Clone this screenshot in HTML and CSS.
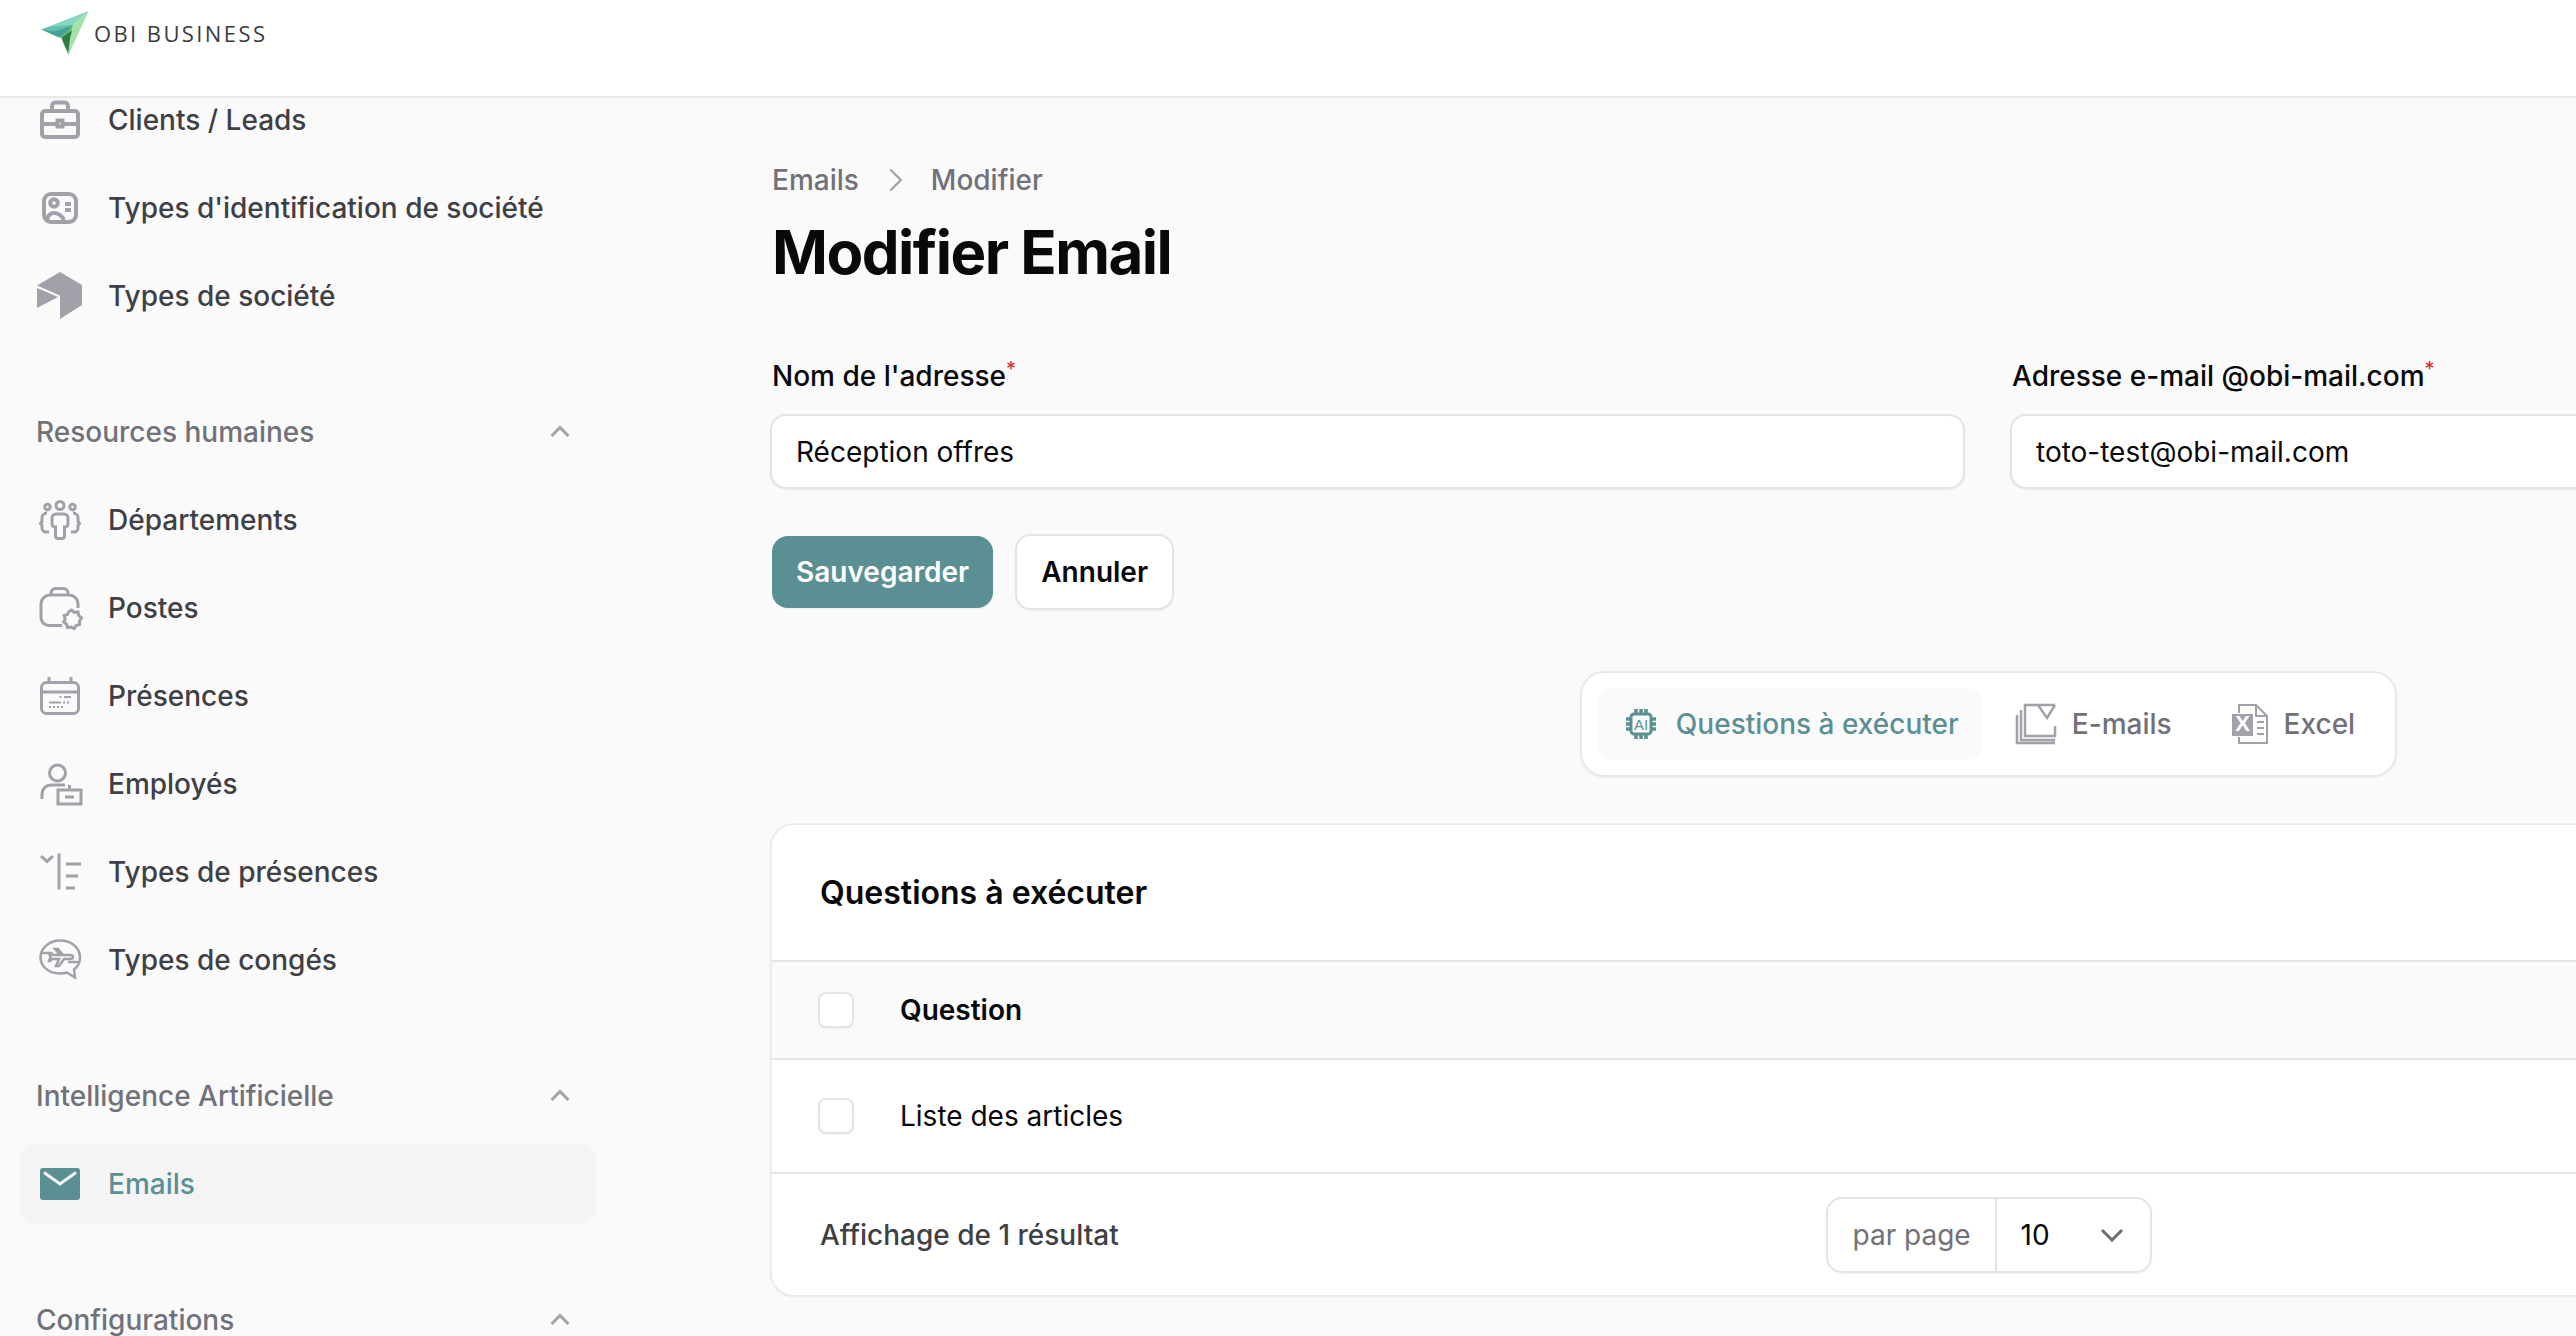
FILE: index.html
```html
<!DOCTYPE html>
<html lang="fr">
<head>
<meta charset="utf-8">
<title>Modifier Email</title>
<link rel="stylesheet" href="styles.css">
</head>
<body>
<header class="topbar">
  <a class="brand">
    <svg class="brand-logo" viewBox="10 6 48 45" aria-hidden="true">
      <polygon points="10.7,25 57.3,6.7 42,21 24,28" fill="#8ad6c5"/>
      <polygon points="10.7,25 42,21 30,33 28,33" fill="#44a394"/>
      <polygon points="10.7,25 24,27 42,21 20,22" fill="#63bfae"/>
      <polygon points="57.3,6.7 42,21 38,32 37.3,50" fill="#a2e2a6"/>
      <polygon points="42,21 30,33 33,40 37.3,50 38,32" fill="#5ab368"/>
      <polygon points="41,26 31,33 34,41 37.3,47 39,33" fill="#2f7a45"/>
    </svg>
    <span class="brand-name">OBI BUSINESS</span>
  </a>
</header>
<div class="layout">
  <aside class="sidebar">
    <nav class="nav">
      <ul class="nav-list">
        <li class="nav-item">
          <svg class="nav-icon is-bold" viewBox="0 0 40 40"><rect x="2" y="11" width="36" height="26" rx="3"/><path d="M12 11V6a3.500 3.500 0 0 1 3.500-3.500h9A3.500 3.500 0 0 1 28 6v5M2 24h15M23 24h15"/><rect x="17.500" y="20.500" width="5" height="6"/></svg>
          <span>Clients / Leads</span>
        </li>
        <li class="nav-item">
          <svg class="nav-icon is-bold" viewBox="0 0 40 40"><rect x="4" y="6" width="32" height="28" rx="7"/><circle cx="14" cy="15" r="3.800"/><path d="M25 16h6M25 22h6M7 32c1-5 4-7 7-7s8 2 10 7"/></svg>
          <span>Types d'identification de société</span>
        </li>
        <li class="nav-item">
          <svg class="nav-icon is-solid" viewBox="0 0 40 40"><path d="M20-4 42 9v20L20 43V19.500L-3 9.500Z"/><path d="M-3 12 18 21-3 32Z"/></svg>
          <span>Types de société</span>
        </li>
      </ul>
      <div class="nav-group">
        <div class="group-head"><span>Resources humaines</span><svg class="group-chevron" viewBox="0 0 40 40"><path d="M11.500 24 20 15.500 28.500 24"/></svg></div>
        <ul class="nav-list">
          <li class="nav-item">
            <svg class="nav-icon" viewBox="0 0 40 40"><circle cx="20" cy="5.500" r="4"/><circle cx="7.500" cy="7" r="2.800"/><circle cx="32.500" cy="7" r="2.800"/><path d="M16 14h8a4 4 0 0 1 4 4v6a3 3 0 0 1-3.500 3v9a2.500 2.500 0 0 1-2.500 2.500h-4A2.500 2.500 0 0 1 15.500 36v-9A3 3 0 0 1 12 24v-6a4 4 0 0 1 4-4Z"/><path d="M7 13a5 5 0 0 0-5 5v3.500l-1.500 2 1.500 2V28a4 4 0 0 0 4 4h3M33 13a5 5 0 0 1 5 5v3.500l1.500 2-1.500 2V28a4 4 0 0 1-4 4h-3"/></svg>
            <span>Départements</span>
          </li>
          <li class="nav-item">
            <svg class="nav-icon" viewBox="0 0 40 40"><path d="M22 37.500H9a8 8 0 0 1-8-8V16a9 9 0 0 1 9-9h19a9 9 0 0 1 9 9v4"/><path d="M11 7V5a4.500 4.500 0 0 1 4.500-4.500h8A4.500 4.500 0 0 1 28 5v2"/><path d="m31.500 22 3 2.500 3.500-.5.800 3.500 2.700 2.500-2 3 .2 3.500-3.500 1-2 3-3.200-1.500-3.500.500-1-3.500-2.800-2 1.500-3.200-1-3.300 3.300-1.200 1.800-3Z"/></svg>
            <span>Postes</span>
          </li>
          <li class="nav-item">
            <svg class="nav-icon" viewBox="0 0 40 40"><rect x="1.500" y="6.500" width="37" height="31" rx="5"/><path d="M1.500 16h37M9 1v5.500M31 1v5.500"/><path class="fine" d="M19.500 21h2M24 21h7M9 26.500h12M23 26.500h2M27 26.500h2M9 31h2M13 31h2M17 31h2M21 31h2"/></svg>
            <span>Présences</span>
          </li>
          <li class="nav-item">
            <svg class="nav-icon" viewBox="0 0 40 40"><circle cx="17.500" cy="9" r="8"/><path d="M2 35v-5a9 9 0 0 1 9-9h14"/><rect x="18" y="26" width="23" height="14"/><path d="M29.500 26v-5M25 33h9"/></svg>
            <span>Employés</span>
          </li>
          <li class="nav-item">
            <svg class="nav-icon" viewBox="0 0 40 40"><path d="m1 4 6 5.500L13 4M19 1.500v36M26 12h15M26 24h12M26 36h9"/></svg>
            <span>Types de présences</span>
          </li>
          <li class="nav-item">
            <svg class="nav-icon is-thin" viewBox="0 0 40 40"><path d="M20 .500c11 0 20 7 20 17 0 5-2 9-6 12l1 8-8-5c-2 .600-4.500 1-7 1-11 0-19.500-7-19.500-16S9 .500 20 .500Z"/><path d="M2 13h10M28 22h10M15 9h3l5 6h7c2 0 3 .800 3 2s-1 2-3 2h-6l-5 7h-3l3-7h-7l-2 2H9l1.500-4L9 13h2l2 2h7l-5-6Z"/></svg>
            <span>Types de congés</span>
          </li>
        </ul>
      </div>
      <div class="nav-group">
        <div class="group-head"><span>Intelligence Artificielle</span><svg class="group-chevron" viewBox="0 0 40 40"><path d="M11.500 24 20 15.500 28.500 24"/></svg></div>
        <ul class="nav-list">
          <li class="nav-item is-active">
            <svg class="nav-icon mail-icon" viewBox="0 0 40 40"><rect y="4" width="40" height="32" rx="3"/><path d="M4 8.500 20 20 36 8.500"/></svg>
            <span>Emails</span>
          </li>
        </ul>
      </div>
      <div class="nav-group">
        <div class="group-head"><span>Configurations</span><svg class="group-chevron" viewBox="0 0 40 40"><path d="M11.500 24 20 15.500 28.500 24"/></svg></div>
      </div>
    </nav>
  </aside>
  <main class="main">
    <div class="content">
      <ol class="crumbs">
        <li>Emails</li>
        <li class="crumb-sep"><svg viewBox="0 0 24 24"><path d="m8 3 9 9-9 9"/></svg></li>
        <li>Modifier</li>
      </ol>
      <h1 class="title">Modifier Email</h1>
      <form class="form">
        <div class="form-grid">
          <label class="field">
            <span class="field-label">Nom de l'adresse<sup class="req">*</sup></span>
            <input class="text-input" type="text" value="Réception offres">
          </label>
          <label class="field">
            <span class="field-label">Adresse e-mail @obi-mail.com<sup class="req">*</sup></span>
            <input class="text-input" type="text" value="toto-test@obi-mail.com">
          </label>
        </div>
        <div class="actions">
          <button class="btn btn-primary" type="button">Sauvegarder</button>
          <button class="btn btn-light" type="button">Annuler</button>
        </div>
      </form>
      <div class="tabs-wrap">
        <div class="tabs">
          <div class="tab is-active">
            <svg class="tab-icon chip" viewBox="0 0 30 30"><rect x="5" y="5" width="20" height="20" rx="3"/><path class="pins" d="M10 0v5M15 0v5M20 0v5M10 25v5M15 25v5M20 25v5M0 10h5M0 15h5M0 20h5M25 10h5M25 15h5M25 20h5"/><text x="15" y="20.500" text-anchor="middle">AI</text></svg>
            <span>Questions à exécuter</span>
          </div>
          <div class="tab tab-mails">
            <svg class="tab-icon layers" viewBox="0 0 40 40"><path d="M39 22v10H9V1h30"/><path d="m22 1 9 13L39 1"/><path d="M5 6v30h34M1 11v28h38"/></svg>
            <span>E-mails</span>
          </div>
          <div class="tab">
            <svg class="tab-icon excel" viewBox="0 0 36 40"><path d="M7 9V1h17l11 11v27H7v-6"/><path d="M24 1v11h11M25 18h7M25 24h7M25 30h7"/><rect class="excel-x" y="10" width="21" height="22"/><text x="10.500" y="27" text-anchor="middle">X</text></svg>
            <span>Excel</span>
          </div>
        </div>
      </div>
      <section class="card">
        <h2 class="card-head">Questions à exécuter</h2>
        <div class="row row-head">
          <input class="check" type="checkbox">
          <span>Question</span>
        </div>
        <div class="row row-body">
          <input class="check" type="checkbox">
          <span>Liste des articles</span>
        </div>
        <div class="card-foot">
          <span class="result">Affichage de 1 résultat</span>
          <div class="per-page">
            <span class="per-label">par page</span>
            <span class="per-value">10<svg viewBox="0 0 24 24"><path d="m4 8 8 8 8-8"/></svg></span>
          </div>
          <span></span>
        </div>
      </section>
    </div>
  </main>
</div>
</body>
</html>
```

FILE: styles.css
```css
* { box-sizing: border-box; }
html, body { margin: 0; height: 100%; }
body {
  width: 2576px;
  height: 1336px;
  overflow: hidden;
  background: #fafafa;
  color: #09090b;
  font-family: Inter, "Liberation Sans", sans-serif;
  font-size: 28px;
  line-height: 40px;
}
ul, ol { list-style: none; margin: 0; padding: 0; }

.topbar {
  position: relative;
  z-index: 2;
  height: 96px;
  background: #fff;
  box-shadow: 0 2px 2px rgba(0, 0, 0, .08);
  padding: 10px 0 0 40px;
}
.brand { display: flex; align-items: flex-start; gap: 4px; }
.brand-logo { width: 50px; height: 46px; display: block; flex: none; }
.brand-name {
  font-family: "Open Sans", sans-serif;
  font-size: 22px;
  font-weight: 500;
  line-height: 30px;
  letter-spacing: 2.400px;
  color: #3c3c3f;
  margin-top: 8px;
}

.layout { display: flex; height: 1240px; }
.sidebar { width: 616px; flex: none; overflow: hidden; padding: 0 20px; }
.nav { margin-top: -16px; display: flex; flex-direction: column; gap: 72px; }
.nav-list { display: flex; flex-direction: column; gap: 8px; }
.nav-group { display: flex; flex-direction: column; gap: 24px; }
.nav-item {
  height: 80px;
  display: flex;
  align-items: center;
  gap: 28px;
  padding: 0 20px;
  border-radius: 16px;
  color: #3f3f46;
  font-weight: 500;
}
.nav-icon {
  width: 40px;
  height: 40px;
  flex: none;
  overflow: visible;
  fill: none;
  stroke: #a1a1aa;
  stroke-width: 3;
}
.nav-icon.is-bold { stroke-width: 4; }
.nav-icon.is-thin { stroke-width: 2.500; }
.nav-icon .fine { stroke-width: 2; }
.nav-icon.is-solid { fill: #a1a1aa; stroke: none; }
.nav-item.is-active { background: #f4f4f5; color: #5a9094; }
.mail-icon rect { fill: #5a9094; stroke: none; }
.mail-icon path { stroke: #fafafa; }
.group-head {
  height: 48px;
  display: flex;
  align-items: center;
  justify-content: space-between;
  padding: 0 16px;
  color: #71717a;
  font-weight: 500;
}
.group-chevron { width: 40px; height: 40px; fill: none; stroke: #a1a1aa; stroke-width: 3; }

.main { flex: 1; min-width: 0; padding: 64px 0 0 156px; }
.content { width: 2433px; }
.crumbs { display: flex; align-items: center; color: #71717a; font-weight: 500; }
.crumb-sep { width: 72px; display: flex; justify-content: center; }
.crumb-sep svg { width: 28px; height: 28px; fill: none; stroke: #a1a1aa; stroke-width: 2; }
.title {
  margin: 16px 0 0;
  font-size: 60px;
  line-height: 72px;
  font-weight: 700;
  letter-spacing: -1.500px;
}

.form { margin-top: 68px; }
.form-grid { display: grid; grid-template-columns: 1fr 1fr; gap: 47px; }
.field { display: flex; flex-direction: column; gap: 18px; }
.field-label { font-weight: 500; }
.req { color: #dc2626; font-size: 20px; line-height: 0; font-weight: 400; }
.text-input {
  height: 75px;
  width: calc(100% + 2px);
  margin-left: -2px;
  border: 2px solid #e4e4e7;
  border-radius: 16px;
  background: #fff;
  box-shadow: 0 1px 2px rgba(0, 0, 0, .06);
  padding: 0 24px;
  font: inherit;
  color: #09090b;
  outline: none;
}
.actions { display: flex; align-items: center; gap: 22px; margin-top: 45px; }
.btn {
  height: 72px;
  border-radius: 16px;
  font: inherit;
  font-weight: 600;
  padding: 0 24px;
  border: 0;
}
.btn-primary { background: #5a9094; color: #fff; box-shadow: 0 1px 2px rgba(0, 0, 0, .06); }
.btn-light {
  height: 76px;
  width: 159px;
  padding: 0;
  background: #fff;
  color: #09090b;
  border: 2px solid #e4e4e7;
  box-shadow: 0 1px 2px rgba(0, 0, 0, .06);
}

.tabs-wrap { display: flex; justify-content: center; margin-top: 61px; }
.tabs {
  height: 106px;
  display: flex;
  align-items: center;
  gap: 8px;
  padding: 0 16px 0 15px;
  background: #fff;
  border: 2px solid #e9e9eb;
  border-radius: 24px;
  box-shadow: 0 1px 2px rgba(0, 0, 0, .05);
}
.tab {
  height: 72px;
  display: flex;
  align-items: center;
  gap: 16px;
  padding: 0 24px;
  border-radius: 16px;
  color: #71717a;
  font-weight: 500;
}
.tab.is-active { background: #fafafa; color: #5a9094; gap: 20px; padding: 0 24px 0 29px; }
.tab-mails { padding: 0 28px 0 25px; }
.tab-icon { flex: none; overflow: visible; fill: none; }
.chip { width: 30px; height: 30px; stroke: #5a9094; stroke-width: 3; }
.chip .pins { stroke-width: 3.500; }
.chip text { font-family: "Liberation Sans", sans-serif; font-size: 15px; fill: #5a9094; stroke: none; }
.layers { width: 40px; height: 40px; stroke: #a1a1aa; stroke-width: 2.500; }
.excel { width: 36px; height: 40px; stroke: #a1a1aa; stroke-width: 2; }
.excel-x { fill: #a1a1aa; stroke: none; }
.excel text { font-family: "Liberation Sans", sans-serif; font-size: 22px; font-weight: 700; fill: #fff; stroke: none; }

.card {
  margin: 46px 0 0 -2px;
  width: 2437px;
  height: 474px;
  background: #fff;
  border: 2px solid #ececee;
  border-radius: 24px;
  box-shadow: 0 1px 2px rgba(0, 0, 0, .05);
  display: flex;
  flex-direction: column;
}
.card-head {
  height: 135px;
  margin: 0;
  padding: 0 48px;
  display: flex;
  align-items: center;
  font-size: 32px;
  font-weight: 600;
}
.row {
  display: flex;
  align-items: center;
  gap: 46px;
  padding: 0 46px;
  border-top: 2px solid #e4e4e7;
}
.row-head { height: 98px; background: #fafafa; font-weight: 600; }
.row-body { height: 114px; }
.check {
  appearance: none;
  width: 36px;
  height: 36px;
  margin: 0;
  flex: none;
  background: #fff;
  border: 2px solid #e4e4e7;
  border-radius: 8px;
  box-shadow: 0 1px 2px rgba(0, 0, 0, .06);
}
.card-foot {
  flex: 1;
  display: grid;
  grid-template-columns: 1fr auto 1fr;
  align-items: center;
  padding: 0 48px;
  border-top: 2px solid #e4e4e7;
}
.result { color: #3f3f46; font-weight: 500; }
.per-page {
  height: 76px;
  display: flex;
  align-items: center;
  border: 2px solid #e4e4e7;
  border-radius: 16px;
  box-shadow: 0 1px 2px rgba(0, 0, 0, .06);
}
.per-label { width: 167px; padding-left: 25px; color: #71717a; }
.per-value {
  width: 155px;
  height: 100%;
  display: flex;
  align-items: center;
  justify-content: space-between;
  padding: 0 23px 0 24px;
  border-left: 2px solid #e4e4e7;
}
.per-value svg { width: 30px; height: 30px; fill: none; stroke: #71717a; stroke-width: 2.500; }
```
